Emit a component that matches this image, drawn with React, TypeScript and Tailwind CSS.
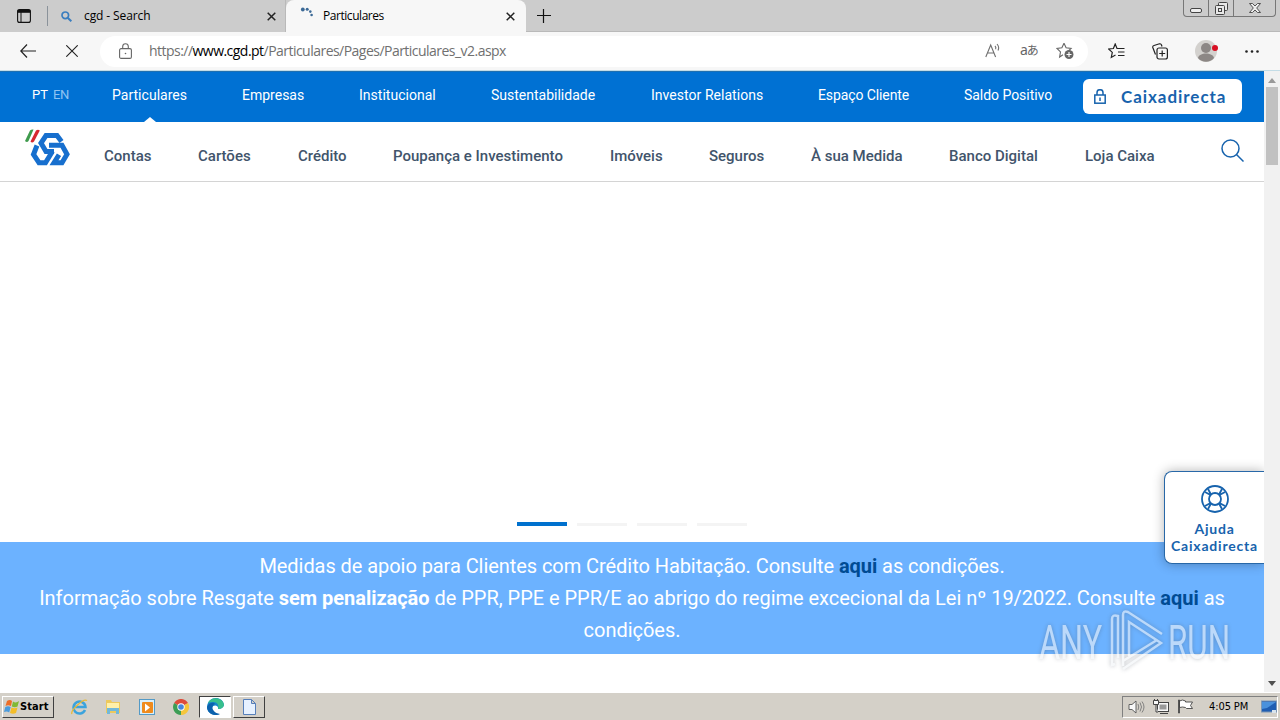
import { clsx } from "clsx";

const topNav = [
  { label: "Particulares", spacing: "tracking-[0.02px]" },
  { label: "Empresas", spacing: "tracking-[0px]" },
  { label: "Institucional", spacing: "tracking-[0.02px]" },
  { label: "Sustentabilidade", spacing: "tracking-[0px]" },
  { label: "Investor Relations", spacing: "tracking-[0.04px]" },
  { label: "Espaço Cliente", spacing: "tracking-[-0.1px]" },
  { label: "Saldo Positivo", spacing: "tracking-[-0.04px]" },
];

const mainNav = [
  "Contas",
  "Cartões",
  "Crédito",
  "Poupança e Investimento",
  "Imóveis",
  "Seguros",
  "À sua Medida",
  "Banco Digital",
  "Loja Caixa",
];

function TabClose() {
  return (
    <svg className="h-[9px] w-[9px] shrink-0" viewBox="0 0 9 9" stroke="#222" strokeWidth="1.5">
      <path d="M.7.7l7.6 7.6M8.3.7L.7 8.3" />
    </svg>
  );
}

function TabStrip() {
  return (
    <div className="flex h-8 w-full items-start bg-[#cccccc] text-xs text-black">
      <div className="flex h-8 w-[47px] items-center pl-[17px]">
        <svg className="h-[14px] w-[14px]" viewBox="0 0 14 14" fill="none" stroke="#111">
          <rect x=".6" y=".6" width="12.8" height="12.8" rx="2" strokeWidth="1.1" />
          <path d="M.6 2.3h12.8" strokeWidth="3" />
          <path d="M4 3v10" strokeWidth="1" />
        </svg>
      </div>
      <div className="mt-[6px] h-5 w-px bg-[#8a929a]" />
      <div className="flex h-8 w-[238px] items-center border-r border-[#b9b9b9] pr-[9px] pl-[13px]">
        <svg className="h-[11px] w-[11px]" viewBox="0 0 11 11" fill="none" stroke="#3a7ebf">
          <circle cx="4.3" cy="4.3" r="3.3" strokeWidth="1.7" />
          <path d="M6.7 6.7l3.6 3.6" strokeWidth="2" />
        </svg>
        <span className="ml-[12px] flex-1 tracking-[-0.1px]">cgd - Search</span>
        <TabClose />
      </div>
      <div className="flex h-8 w-[240px] items-center rounded-t-lg bg-[#f7f7f7] pr-[11px] pl-[14px]">
        <svg className="mb-[6px] h-[14px] w-[14px]" viewBox="0 0 14 14" fill="#3b6996">
          <circle cx="2.8" cy="3.5" r="1.9" />
          <circle cx="7.2" cy="3.3" r="1.5" />
          <circle cx="10.3" cy="5.6" r="1.3" />
          <circle cx="11.6" cy="9" r="1.3" />
        </svg>
        <span className="ml-[9px] flex-1 tracking-[-0.45px]">Particulares</span>
        <TabClose />
      </div>
      <div className="flex h-8 flex-1 items-start justify-between border-b border-[#b9b9b9] pr-[4px] pl-[11px]">
        <svg className="mt-[9px] h-[14px] w-[14px]" viewBox="0 0 14 14" stroke="#111" strokeWidth="1.2">
          <path d="M6.500 0v14M0 6.500h14" />
        </svg>
        <div className="flex h-[17px] w-[93px] rounded-b-[4px] border border-t-0 border-[#777]">
          <div className="flex w-[25px] justify-center border-r border-[#777] pt-[8px]">
            <div className="h-[5px] w-3 rounded-[2px] border border-[#444] bg-[#eee]" />
          </div>
          <div className="flex w-[25px] justify-center border-r border-[#777] pt-[2px]">
            <svg className="h-[13px] w-[13px]" viewBox="0 0 13 13" fill="#e8e8e8" stroke="#444">
              <rect x="3.5" y=".5" width="9" height="8" rx="1" />
              <rect x=".5" y="3.5" width="9" height="9" rx="1" />
              <rect x="3.5" y="6.5" width="3" height="3" />
            </svg>
          </div>
          <div className="flex flex-1 justify-center pt-[3px]">
            <svg className="h-[10px] w-[12px]" viewBox="0 0 12 10" fill="#eee" stroke="#444" strokeWidth=".9">
              <path d="M.5.5h3L6 3 8.500.5h3L7.700 5l3.800 4.500h-3L6 7 3.500 9.500h-3L4.300 5z" />
            </svg>
          </div>
        </div>
      </div>
    </div>
  );
}

function AddressBar() {
  return (
    <div className="flex h-[38px] w-full items-center bg-[#f7f7f7]">
      <svg className="ml-5 h-[14px] w-[16px]" viewBox="0 0 16 14" fill="none" stroke="#222" strokeWidth="1.2">
        <path d="M7 .5L.8 7 7 13.500M.8 7H16" />
      </svg>
      <svg className="ml-[30px] h-3 w-3" viewBox="0 0 12 12" stroke="#222" strokeWidth="1.1">
        <path d="M.3.3l11.400 11.400M11.700.3L.3 11.700" />
      </svg>
      <div className="ml-[22px] flex h-[31px] w-[988px] items-center rounded-full bg-white pl-[19px]">
        <svg className="h-4 w-[13px]" viewBox="0 0 13 16" fill="none" stroke="#666" strokeWidth="1.1">
          <rect x=".6" y="5.600" width="11.800" height="9.800" rx="1.500" />
          <path d="M3.700 5.600V3.500a2.800 2.800 0 015.600 0v2.100" />
          <circle cx="6.500" cy="10.500" r=".8" fill="#666" stroke="none" />
        </svg>
        <span className="ml-[17px] flex-1 text-sm tracking-[-0.53px] text-[#707070]">
          https://<span className="text-black">www.cgd.pt</span>/Particulares/Pages/Particulares_v2.aspx
        </span>
        <svg className="mb-[2px] h-[15px] w-[17px]" viewBox="0 0 17 15" fill="none" stroke="#707070" strokeWidth="1.1">
          <path d="M.8 14L5.700 2l4.900 12M2.500 10h6.500" />
          <path d="M10 3c1 1 1 2.300.6 3.200M12 1c2 2.200 2 4.500 1 6.500" />
        </svg>
        <span className="mb-[3px] ml-[18px] w-[20px] font-['Noto_Sans','Noto_Sans_CJK_JP',sans-serif] text-[14px] leading-none tracking-[-1px] whitespace-nowrap text-[#666]">
          a<span className="text-[12px]">あ</span>
        </span>
        <svg className="mr-[13px] ml-[16px] h-[18px] w-[19px]" viewBox="0 0 19 18" fill="none" stroke="#666" strokeWidth="1.1">
          <path d="M8 1.200l2.100 4.600 5 .6-3.700 3.400M7 12.800L3.600 15l.9-5.100L.9 6.400l5-.6L8 1.200" />
          <circle cx="13" cy="12.500" r="4.500" fill="#666" stroke="none" />
          <path d="M13 10v5M10.500 12.500h5" stroke="#fff" />
        </svg>
      </div>
      <svg className="ml-5 h-4 w-[17px]" viewBox="0 0 17 16" fill="none" stroke="#222" strokeWidth="1.2">
        <path d="M10 5.500H9L7.200 1 5.400 5.500.6 6l3.700 3.400-1 5L7.500 12M10 5.500h6.500M10 9h6.500M10 12.500h6.500" />
      </svg>
      <svg className="ml-[27px] h-[17px] w-4" viewBox="0 0 16 17" fill="none" stroke="#222" strokeWidth="1.200">
        <path d="M3.500 11.500L.8 4.500Q.4 3 2 2.500L7.500.8Q9 .5 9.500 2l.5 1.500" />
        <rect x="5" y="5" width="10.400" height="11" rx="2" />
        <path d="M10.200 7.500v6M7.200 10.500h6" />
      </svg>
      <svg className="ml-[27px] h-[22px] w-6" viewBox="0 0 24 22">
        <circle cx="11" cy="11" r="11" fill="#d3d1ce" />
        <circle cx="11" cy="8" r="5" fill="#8c8785" />
        <path d="M3 18c1-6 15-6 16 0-4 5-12 5-16 0z" fill="#8c8785" />
        <circle cx="20" cy="8" r="3" fill="#d80f23" />
      </svg>
      <svg className="ml-[26px] h-[3px] w-[14px]" viewBox="0 0 14 3" fill="#222">
        <circle cx="1.500" cy="1.500" r="1.300" />
        <circle cx="7" cy="1.500" r="1.300" />
        <circle cx="12.500" cy="1.500" r="1.300" />
      </svg>
    </div>
  );
}

function CaixaLogo() {
  return (
    <svg className="h-[38px] w-[46px]" viewBox="0 0 46 38">
      <path d="M1 12L6 1.500Q7.500 0 9.500.5L4.500 12Q3 14 1 12z" fill="#3f9b4d" />
      <path d="M6.500 12.500L12 1.500Q14 0 15.800 1.500L10 12.500Q8 14.500 6.500 12.500z" fill="#d7282f" />
      <g fill="none" stroke="#176fce" strokeWidth="5">
        <path d="M37.500 12.500L33 6.500H22L17 14l5 8.500h8" />
        <path d="M13 16.500L9.500 25.500 15 33.700h6.500l7-11.500" />
        <path d="M25 16.200h13l5 9.100-5 8.400h-8l5-8" />
      </g>
    </svg>
  );
}

function SiteHeader() {
  return (
    <header>
      <div className="flex h-[51px] border-t border-[#1f70b0] bg-[#0071d3] text-white">
        <div className="flex w-28 gap-[5px] pt-[13px] pl-8 text-[13px] leading-5">
          <span>PT</span>
          <span className="tracking-[-0.3px] text-[#8fc3f2]">EN</span>
        </div>
        <nav className="grid w-[971px] grid-cols-[130px_117px_132px_160px_167px_146px_1fr] pt-[13px] text-sm leading-5">
          {topNav.map((item, i) => (
            <a key={item.label} className={clsx("relative whitespace-nowrap", item.spacing)}>
              {item.label}
              {i === 0 && (
                <svg className="absolute top-[32px] left-[32px] h-[5px] w-3" viewBox="0 0 12 5">
                  <path d="M0 5l6-5 6 5z" fill="#fff" />
                </svg>
              )}
            </a>
          ))}
        </nav>
        <button className="mt-[7px] flex h-[35px] w-[159px] items-center rounded-[6px] bg-white pl-[11px] text-[#1763ad]">
          <svg className="h-[15px] w-3" viewBox="0 0 12 15" fill="none" stroke="#1763ad" strokeWidth="1.500">
            <rect x=".8" y="6" width="10.400" height="8.200" />
            <path d="M3 6V3.700a3 3 0 016 0V6M6 8.500v3.500" />
          </svg>
          <span className="ml-[15px] font-['Lato',sans-serif] text-[17px] font-bold tracking-[0.95px]">Caixadirecta</span>
        </button>
      </div>
      <div className="flex h-[60px] border-b border-[#d4d4d4] bg-white">
        <div className="w-[104px] pt-[7px] pl-6">
          <CaixaLogo />
        </div>
        <nav className="grid w-[1117px] grid-cols-[94px_100px_95px_217px_99px_102px_138px_136px_1fr] pt-6 text-[15px] leading-5 font-medium text-[#41546b]">
          {mainNav.map((label) => (
            <a key={label} className="whitespace-nowrap">
              {label}
            </a>
          ))}
        </nav>
        <svg className="mt-[17px] h-[23px] w-6" viewBox="0 0 24 23" fill="none" stroke="#1763ad" strokeWidth="1.500">
          <circle cx="9.500" cy="9.500" r="8.500" />
          <path d="M15.500 15.500l7 7" />
        </svg>
      </div>
    </header>
  );
}

function HelpWidget() {
  return (
    <div className="absolute top-[400px] right-0 flex h-[93px] w-[100px] flex-col items-center rounded-l-lg border border-r-0 border-[#2868a8] bg-white pt-[13px] font-['Lato',sans-serif] text-sm leading-[17px] font-bold text-[#1763ad] shadow-[0_0_12px_rgba(0,0,0,0.3)]">
      <svg className="h-7 w-7" viewBox="0 0 28 28" fill="none" stroke="#1763ad" strokeWidth="1.800">
        <circle cx="14" cy="14" r="13" />
        <circle cx="14" cy="14" r="6" />
        <path d="M4 7l5.500 3M7 4l3 5.500M21 4l-3 5.500M24 7l-5.500 3M4 21l5.500-3M7 24l3-5.500M24 21l-5.500-3M21 24l-3-5.500" />
      </svg>
      <span className="mt-[7px] tracking-[0.8px]">Ajuda</span>
      <span className="tracking-[0.8px]">Caixadirecta</span>
    </div>
  );
}

function Watermark() {
  return (
    <div className="absolute top-[536px] left-[1034px] h-[68px] w-[204px] opacity-60 drop-shadow-[0_0_2px_rgba(70,80,95,0.6)]">
      <svg className="h-full w-full" viewBox="0 0 204 68" fill="#f1f4f7" fontFamily="Roboto" fontSize="49">
        <text transform="translate(5 52) scale(.66 1)">ANY</text>
        <text transform="translate(134 52) scale(.64 1)">RUN</text>
        <path
          d="M81 57l-3 1V12q0-5 6-3v42M89 59V8q0-5 5-3l34 22M95 49V15l32 21-38 26M89 54l34-21"
          fill="none"
          stroke="#f1f4f7"
          strokeWidth="2.500"
        />
      </svg>
    </div>
  );
}

function Scrollbar() {
  return (
    <div className="flex w-4 flex-col items-center bg-[#f1f1f1]">
      <svg className="mt-[7px] h-[5px] w-2" viewBox="0 0 8 5">
        <path d="M0 5l4-5 4 5z" fill="#999" />
      </svg>
      <div className="mt-[4px] h-[78px] w-3 bg-[#c1c1c1]" />
      <svg className="mt-auto mb-[6px] h-[5px] w-2" viewBox="0 0 8 5">
        <path d="M0 0l4 5 4-5z" fill="#505050" />
      </svg>
    </div>
  );
}

function Page() {
  return (
    <div className="relative flex h-[622px] border-t border-[#c3dce6] font-['Roboto',sans-serif]">
      <div className="h-full w-[1264px] bg-white">
        <SiteHeader />
        <main>
          <div className="flex h-[360px] items-end justify-center gap-[10px] pb-[16px]">
            {[0, 1, 2, 3].map((n) => (
              <div key={n} className={clsx("w-[50px]", n === 0 ? "h-1 bg-[#0071ce]" : "h-[3px] bg-[#f4f4f4]")} />
            ))}
          </div>
          <div className="h-[112px] bg-[#6cb2ff] px-[30px] pt-2 text-center text-xl leading-8 text-white">
            <p className="tracking-[-0.06px]">
              Medidas de apoio para Clientes com Crédito Habitação. Consulte <b className="text-[#004b93]">aqui</b> as condições.
            </p>
            <p className="tracking-[-0.03px]">
              Informação sobre Resgate <b>sem penalização</b> de PPR, PPE e PPR/E ao abrigo do regime excecional da Lei nº 19/2022. Consulte{" "}
              <b className="text-[#004b93]">aqui</b> as
              <br />
              condições.
            </p>
          </div>
        </main>
        <div className="absolute inset-y-0 left-0 w-[1264px] overflow-hidden">
          <HelpWidget />
          <Watermark />
        </div>
      </div>
      <Scrollbar />
    </div>
  );
}

function Taskbar() {
  return (
    <footer className="flex h-7 items-center border-t border-white bg-[#d4d0c8] font-['DejaVu_Sans_Condensed','DejaVu_Sans',sans-serif] text-[11px] text-black">
      <div className="ml-[2px] flex h-[22px] w-[52px] items-center border border-white border-r-[#404040] border-b-[#404040] pl-px">
        <svg className="h-4 w-4" viewBox="0 0 16 16">
          <path d="M3 2q3-2 5 0L7 7Q4 5.500 1.500 7z" fill="#ed6d27" />
          <path d="M9 2.500q3 2 6-.5l-1.500 5.500Q11 9 7.800 7.500z" fill="#80b936" />
          <path d="M1.300 8Q4 6.500 6.700 8l-1.500 5.500Q3 12 0 13z" fill="#4b9bdc" />
          <path d="M7.500 8.500q3 1.500 6 0L12 14q-3 1.500-6 0z" fill="#f4bd28" />
        </svg>
        <span className="mt-px font-bold tracking-[0.1px]">Start</span>
      </div>
      <svg className="ml-[17px] h-4 w-[17px]" viewBox="0 0 17 16" fill="none">
        <path d="M14 11a6 6 0 11.500-3H4" stroke="#3ba3dd" strokeWidth="2.500" />
        <path d="M1 15C-1 12 12-1 16 1.500" stroke="#e9b936" strokeWidth="1.300" />
      </svg>
      <svg className="ml-[17px] h-4 w-4" viewBox="0 0 16 16">
        <path d="M1 1h5l1 2h8v11H1z" fill="#edc95c" />
        <path d="M2 4h12v5H2z" fill="#fff0a9" />
        <path d="M2 15V9h12v6h-3v-3H5v3z" fill="#72b8d9" />
      </svg>
      <svg className="ml-[18px] h-4 w-4" viewBox="0 0 16 16">
        <rect x=".5" y=".5" width="15" height="15" fill="#d9effb" stroke="#549ac6" />
        <rect x="3" y="3" width="11" height="11" rx="1" fill="#ef8b1d" />
        <path d="M6 4.500l5 4-5 4z" fill="#fff" />
      </svg>
      <svg className="ml-[18px] h-4 w-4" viewBox="0 0 16 16">
        <path d="M8 8L1.100 4A8 8 0 0115 4z" fill="#dd4c3b" />
        <path d="M8 8L1.100 4A8 8 0 008 16z" fill="#3c9d55" />
        <path d="M8 8l7-4a8 8 0 01-7 12z" fill="#f5c63b" />
        <circle cx="8" cy="8" r="3.700" fill="#fff" />
        <circle cx="8" cy="8" r="2.800" fill="#4687dd" />
      </svg>
      <div className="ml-[10px] flex h-[22px] w-8 items-center justify-center border border-[#404040] border-r-white border-b-white bg-white">
        <svg className="h-[17px] w-[17px]" viewBox="0 0 17 17">
          <path d="M0 9C1-3 16-2 17 7q-1 4-6 4c1-4-5-5-6-1 0 4 3 7 8 6-6 3-13-1-13-7z" fill="#1686c9" />
          <path d="M1 5C4-2 16-1 17 7q-1 4-6 4C13 4 6 3 1 5z" fill="#38bf8d" />
          <path d="M0 9c2-5 7-5 8-3-4 1-4 8 5 10-6 3-13-1-13-7z" fill="#0c61ad" />
        </svg>
      </div>
      <div className="ml-[2px] flex h-[22px] w-8 items-center justify-center border border-white border-r-[#404040] border-b-[#404040]">
        <svg className="h-4 w-[13px]" viewBox="0 0 13 16" fill="#e7f1ff" stroke="#567fba">
          <path d="M.5.500h8l4 4v11H.5zM8.500.500v4h4" />
        </svg>
      </div>
      <div className="ml-auto flex h-[22px] w-[156px] items-center border border-[#808080] border-r-white border-b-white">
        <svg className="ml-[5px] h-[14px] w-[17px]" viewBox="0 0 17 14" fill="#f8f8f8" stroke="#555" strokeWidth=".9">
          <path d="M1 4.500h3L8 1v12L4 9.500H1z" />
          <path d="M10 4q1.500 3 0 6M12 2.500q3 4.500 0 9M14 1.500q4 5.500 0 11" fill="none" stroke="#777" />
        </svg>
        <svg className="ml-[8px] h-[15px] w-4" viewBox="0 0 16 15" fill="#f8f8f8" stroke="#444">
          <rect x="4.500" y="3.500" width="11" height="9" />
          <rect x="6.500" y="5.500" width="7" height="5" fill="#999" stroke="none" />
          <path d="M7 14.500h8M3 6v7h2" />
          <path d="M.5 1.500h5v4h-5zM1.500 0v2M4.500 0v2" />
        </svg>
        <svg className="ml-[8px] h-[15px] w-[17px]" viewBox="0 0 17 15" fill="#fff" stroke="#444" strokeWidth=".9">
          <path d="M1.500 14V1h1v13zM2.500 2q3-2 6 0v1h7l-2 3.500 2 3h-6l-1-1q-3-1-6 0z" />
        </svg>
        <span className="mt-px ml-[15px] tracking-[-0.1px] whitespace-nowrap">4:05 PM</span>
        <svg className="ml-auto h-[15px] w-4" viewBox="0 0 16 15">
          <rect x=".5" y="2" width="15" height="11" fill="#1f5db2" stroke="#7e98b5" />
          <path d="M1 3h14L6 9l-5 1z" fill="#4a91dc" />
          <path d="M11 11h4v3h-4z" fill="#d9e4ed" />
        </svg>
      </div>
      <div className="w-[2px]" />
    </footer>
  );
}

export default function App() {
  return (
    <div className="h-[720px] w-[1280px] overflow-hidden bg-white font-['Open_Sans',sans-serif]">
      <TabStrip />
      <AddressBar />
      <Page />
      <Taskbar />
    </div>
  );
}
